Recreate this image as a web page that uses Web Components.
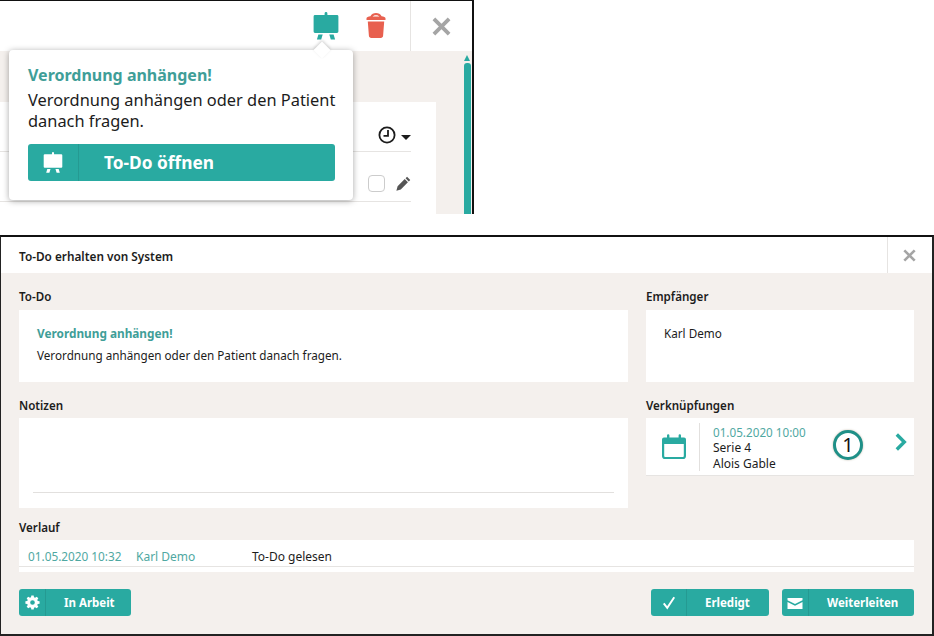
<!DOCTYPE html>
<html lang="de">
<head>
<meta charset="utf-8">
<title>To-Do</title>
<style>
  html,body{margin:0;padding:0;background:#fff;}
  body{width:934px;height:636px;overflow:hidden;font-family:"Noto Sans","Open Sans",sans-serif;color:#1c1c1c;display:flex;flex-direction:column;}
</style>
</head>
<body>

<todo-snippet>
  <todo-popover>
    <span slot="title">Verordnung anhängen!</span>
    Verordnung anhängen oder den Patient danach fragen.
    <todo-button slot="action" icon="board" divider="50" size="17.3" height="37" inset="25">To-Do öffnen</todo-button>
  </todo-popover>
</todo-snippet>

<todo-dialog heading="To-Do erhalten von System">
  <todo-section slot="main" label="To-Do" height="72" label-h="37" pad="15px 18px">
    <div style="color:#3f9e98;font-weight:700;line-height:16px;font-size:11.8px">Verordnung anhängen!</div>
    <div style="margin-top:6px;line-height:16px;font-size:11.7px">Verordnung anhängen oder den Patient danach fragen.</div>
  </todo-section>
  <todo-section slot="side" label="Empfänger" height="72" label-h="37" pad="15px 18px">
    <div style="line-height:16px;font-size:11.7px">Karl Demo</div>
  </todo-section>
  <todo-section slot="main" label="Notizen" height="90" pad="0 14px">
    <div style="height:74px;border-bottom:1px solid #e2e0de"></div>
  </todo-section>
  <todo-section slot="side" label="Verknüpfungen" height="58">
    <todo-link date="01.05.2020 10:00" series="Serie 4" patient="Alois Gable" count="1"></todo-link>
  </todo-section>
  <todo-section slot="wide" label="Verlauf" height="32" label-h="32" label-top="11">
    <todo-log-row when="01.05.2020 10:32" who="Karl Demo" what="To-Do gelesen"></todo-log-row>
  </todo-section>
  <todo-button slot="left" icon="gear" divider="26" size="11.5" height="27" width="112" inset="18">In Arbeit</todo-button>
  <todo-button slot="right" icon="check" divider="35" size="11.5" height="27" width="118" inset="18">Erledigt</todo-button>
  <todo-button slot="right" icon="mail" divider="26" size="11.5" height="27" width="132" inset="18">Weiterleiten</todo-button>
</todo-dialog>

<script>
const ICONS = {
  board: `<svg viewBox="0 0 26 28" width="100%" height="100%"><path fill="currentColor" d="M11.6 1.5a1.4 1.4 0 0 1 2.8 0V3H24a1.4 1.4 0 0 1 1.4 1.4v15.2A1.4 1.4 0 0 1 24 21H2a1.4 1.4 0 0 1-1.4-1.4V4.4A1.4 1.4 0 0 1 2 3h9.6zM5.4 22.5h4.3L8.2 27.6H3.9zM16.3 22.5h4.3l1.5 5.1h-4.3z"/></svg>`,
  trash: `<svg viewBox="0 0 20 25" width="100%" height="100%"><path fill="currentColor" d="M10 0c2.4 0 4.5 1.2 5.6 3.2 2 .3 3.9.9 3.9 2.1V7H.5V5.3c0-1.2 1.9-1.8 3.9-2.1C5.5 1.2 7.600 0 10 0zm0 2.300c-1.400 0-2.600.5-3.400 1.300 2.200-.2 4.600-.2 6.800 0-.8-.8-2-1.300-3.400-1.300zM1.800 8.500h16.400l-1.100 14.300c-.1 1.300-1.100 2.200-2.300 2.200H5.200c-1.200 0-2.200-.9-2.300-2.200z"/></svg>`,
  close: `<svg viewBox="0 0 20 20" width="100%" height="100%"><path fill="none" stroke="currentColor" stroke-width="4" d="M2 2l16 16M18 2L2 18"/></svg>`,
  clock: `<svg viewBox="0 0 18 18" width="100%" height="100%"><circle cx="9" cy="9" r="7.600" fill="none" stroke="currentColor" stroke-width="1.800"/><path fill="none" stroke="currentColor" stroke-width="1.800" d="M10 4v5.800H5.500"/></svg>`,
  pencil: `<svg viewBox="0 0 16 16" width="100%" height="100%"><path fill="currentColor" d="M11.800.8l3.400 3.400-1.600 1.600-3.400-3.400zM9.300 3.300l3.400 3.400-7.600 7.600L.4 15.600l1.300-4.700z"/></svg>`,
  gear: `<svg viewBox="-1 -1 18 18" width="100%" height="100%"><path fill="currentColor" fill-rule="evenodd" d="M6.600-.5h2.800l.4 2.200 1.300.6 1.900-1.300 2 2-1.300 1.900.6 1.300 2.200.4v2.800l-2.200.4-.6 1.300 1.300 1.900-2 2-1.900-1.300-1.300.6-.4 2.200H6.600l-.4-2.200-1.300-.6-1.900 1.300-2-2 1.300-1.900-.6-1.300-2.200-.4V6.600l2.200-.4.6-1.300L1 3l2-2 1.900 1.300 1.300-.6zM8 5.200a2.800 2.800 0 1 0 0 5.600 2.800 2.800 0 0 0 0-5.600z"/></svg>`,
  check: `<svg viewBox="0 0 16 16" width="100%" height="100%"><path fill="none" stroke="currentColor" stroke-width="2.200" d="M2 8.500l4 5L14 1.500"/></svg>`,
  mail: `<svg viewBox="0 0 16 11" width="100%" height="100%"><path fill="currentColor" d="M.5 0h15v2.300L8 6 .5 2.300zM.5 4.100L8 7.800l7.500-3.700V11H.5z"/></svg>`,
  calendar: `<svg viewBox="0 0 26 26" width="100%" height="100%"><path fill="none" stroke="currentColor" stroke-width="2.200" d="M2.100 7.500V22a2 2 0 0 0 2 2h17.800a2 2 0 0 0 2-2V7.500"/><path fill="currentColor" d="M3 3.500h3V1.500a1.200 1.200 0 0 1 2.400 0v2h9.200v-2a1.200 1.200 0 0 1 2.400 0v2h3a2 2 0 0 1 2 2V10H1V5.500a2 2 0 0 1 2-2z"/></svg>`,
  chevron: `<svg viewBox="0 0 12 18" width="100%" height="100%"><path fill="none" stroke="currentColor" stroke-width="3.400" d="M1.800 1.500l7.500 7.500-7.500 7.500"/></svg>`
};

// small helper, every element gets the same open shadow setup
class Base extends HTMLElement {
  render(css, html) {
    if (!this.shadowRoot) this.attachShadow({ mode: 'open' });
    this.shadowRoot.innerHTML = `<style>${css}</style>${html}`;
  }
}

class TodoIcon extends Base {
  connectedCallback() {
    const w = this.getAttribute('w') || 16;
    const h = this.getAttribute('h') || w;
    const color = this.getAttribute('color') || 'inherit';
    this.render(`:host{display:block;width:${w}px;height:${h}px;color:${color};flex:none}`, ICONS[this.getAttribute('name')] || '');
  }
}

class TodoButton extends Base {
  connectedCallback() {
    const div = this.getAttribute('divider');
    const size = this.getAttribute('size');
    const h = this.getAttribute('height');
    const w = this.getAttribute('width');
    const icon = this.getAttribute('icon');
    const dims = { board: [20, 21], gear: [15, 15], check: [14, 14], mail: [16, 11] }[icon];
    this.render(`
      :host{display:flex;height:${h}px;${w ? `width:${w}px;` : ''}background:#29aaa1;color:#fff;border-radius:3px;font-weight:700;font-size:${size}px;box-sizing:border-box}
      .ico{width:${div}px;flex:none;display:flex;align-items:center;justify-content:center;border-right:1px solid #259a92;box-sizing:content-box}
      .txt{flex:1;display:flex;align-items:center;padding-left:${this.getAttribute('inset')}px;white-space:nowrap}
    `, `<div class="ico"><todo-icon name="${icon}" w="${dims[0]}" h="${dims[1]}"></todo-icon></div><div class="txt"><slot></slot></div>`);
  }
}

class TodoPopover extends Base {
  connectedCallback() {
    this.render(`
      :host{display:block;position:absolute;left:9px;top:49px;width:344px;height:150px;box-sizing:border-box;padding:14px 18px 0 19px;background:#fff;border-radius:4px;box-shadow:0 1px 6px rgba(0,0,0,.35);font-size:16.4px;line-height:21px;color:#1c1c1c}
      :host::before{content:"";position:absolute;left:307px;top:-6px;width:12px;height:12px;background:#fff;transform:rotate(45deg);box-shadow:-1px -1px 3px rgba(0,0,0,.18)}
      .title{color:#3f9e98;font-weight:700;font-size:16px;line-height:22px;position:relative}
      .body{margin:3px -6px 0 0;position:relative}
      .act{margin-top:13px;position:relative}
    `, `<div class="title"><slot name="title"></slot></div><div class="body"><slot></slot></div><div class="act"><slot name="action"></slot></div>`);
  }
}

class TodoSnippet extends Base {
  connectedCallback() {
    this.render(`
      :host{display:block;position:relative;width:474px;height:214px;box-sizing:border-box;border-top:1px solid #111;border-right:2px solid #111;background:#f4f0ed;flex:none}
      .head{display:flex;height:50px;background:#fff;justify-content:flex-end}
      .tools{display:flex;align-items:flex-start;gap:27px;padding:11px 24px 0 0}
      .tools todo-icon:last-child{margin-top:1px}
      .close{width:62px;border-left:1px solid #e6e4e2;display:flex;align-items:center;justify-content:center;color:#a5a5a5;box-sizing:border-box}
      .body{display:flex;height:163px;overflow:hidden}
      .card{width:436px;margin-top:51px;background:#fff;box-sizing:border-box;font-size:0}
      .hd{height:50px;border-bottom:1px solid #e6e4e2;margin-right:25px;display:flex;justify-content:flex-end;align-items:center;gap:5px;color:#1c1c1c;box-sizing:border-box;padding-top:17px}
      .caret{width:0;height:0;border:5px solid transparent;border-top-color:#1c1c1c;border-bottom:0;margin-top:4px}
      .row{height:50px;border-bottom:1px solid #e6e4e2;margin-right:25px;display:flex;justify-content:flex-end;align-items:center;gap:11px;box-sizing:border-box;padding-top:14px}
      .cb{width:17px;height:17px;border:1px solid #ccc;border-radius:4px;box-sizing:border-box;background:#fff}
      .track{flex:none;display:flex;flex-direction:column;align-items:flex-start;margin-left:28px;padding-top:4px;width:7px}
      .arrow{width:0;height:0;border:3.500px solid transparent;border-bottom:6px solid #29aaa1;border-top:0;flex:none}
      .bar{flex:1;width:7px;margin-top:2px;background:#29aaa1;border-radius:3px 3px 0 0}
    `, `
      <div class="head">
        <div class="tools">
          <todo-icon name="board" w="26" h="28" color="#29aaa1"></todo-icon>
          <todo-icon name="trash" w="20" h="25" color="#e8604f"></todo-icon>
        </div>
        <div class="close"><todo-icon name="close" w="19" h="19"></todo-icon></div>
      </div>
      <div class="body">
        <div class="card">
          <div class="hd"><todo-icon name="clock" w="18" h="18"></todo-icon><span class="caret"></span></div>
          <div class="row"><span class="cb"></span><todo-icon name="pencil" w="15" h="15" color="#555"></todo-icon></div>
        </div>
        <div class="track"><span class="arrow"></span><span class="bar"></span></div>
      </div>
      <slot></slot>`);
  }
}

class TodoDialog extends Base {
  connectedCallback() {
    this.render(`
      :host{display:flex;flex-direction:column;position:relative;margin-top:21px;width:934px;height:401px;box-sizing:border-box;border-top:2px solid #111;border-left:1px solid #222;border-right:2px solid #222;border-bottom:2px solid #222;background:#f4f0ed;font-size:12px;flex:none}
      header{display:flex;height:36px;background:#fff;align-items:center;font-weight:600;color:#1c1c1c;flex:none;box-sizing:border-box}
      h1{flex:1;margin:0;padding:1px 0 0 18px;font:inherit;font-size:11.8px}
      .x{width:45px;height:100%;border-left:1px solid #e6e4e2;display:flex;align-items:center;justify-content:center;color:#a5a5a5;box-sizing:border-box;padding-right:2px}
      main{display:grid;grid-template-columns:609px 268px;column-gap:18px;padding:0 18px}
      .col{display:flex;flex-direction:column}
      .wide{grid-column:1 / 3}
      footer{display:flex;justify-content:space-between;padding:17px 18px 0}
      .r{display:flex;gap:13px}
    `, `
      <header><h1>${this.getAttribute('heading')}</h1><div class="x"><todo-icon name="close" w="13" h="13"></todo-icon></div></header>
      <main>
        <div class="col"><slot name="main"></slot></div>
        <div class="col"><slot name="side"></slot></div>
        <div class="wide"><slot name="wide"></slot></div>
      </main>
      <footer><slot name="left"></slot><div class="r"><slot name="right"></slot></div></footer>`);
  }
}

class TodoSection extends Base {
  connectedCallback() {
    const pad = this.getAttribute('pad') || '0';
    const lh = this.getAttribute('label-h') || 36;
    const lt = this.getAttribute('label-top') || 15;
    this.render(`
      :host{display:block}
      .lb{height:${lh}px;box-sizing:border-box;padding-top:${lt}px;line-height:17px;font-weight:600;color:#1c1c1c;font-size:11.6px}
      .box{background:#fff;height:${this.getAttribute('height')}px;box-sizing:border-box;padding:${pad}}
    `, `<div class="lb">${this.getAttribute('label')}</div><div class="box"><slot></slot></div>`);
  }
}

class TodoLink extends Base {
  connectedCallback() {
    const a = n => this.getAttribute(n);
    this.render(`
      :host{display:flex;height:58px;align-items:center;border-bottom:1px solid #e6e4e2;box-sizing:border-box;font-size:12px;line-height:16px;position:relative}
      .ic{width:54px;height:48px;flex:none;display:flex;align-items:center;justify-content:center;border-right:1px solid #e2e0de;box-sizing:border-box;color:#29aaa1;padding-left:3px}
      .tx{padding:2px 0 0 13px;flex:1}
      .d{color:#4fa8a2;font-size:11.7px}
      .n{position:absolute;left:187px;top:12px;width:30px;height:30px;border:3px solid #1f9088;border-radius:50%;box-sizing:border-box;font-size:20px;line-height:24px;text-align:center;color:#111;background:#fff;box-shadow:0 0 2px rgba(120,100,60,.5)}
      .chev{position:absolute;left:249px;top:15px;color:#29aaa1}
    `, `
      <div class="ic"><todo-icon name="calendar" w="26" h="26"></todo-icon></div>
      <div class="tx"><div class="d">${a('date')}</div><div>${a('series')}</div><div>${a('patient')}</div></div>
      <div class="n">${a('count')}</div>
      <todo-icon class="chev" name="chevron" w="12" h="18"></todo-icon>`);
  }
}

class TodoLogRow extends Base {
  connectedCallback() {
    const a = n => this.getAttribute(n);
    this.render(`
      :host{display:flex;height:27px;border-bottom:1px solid #e6e4e2;box-sizing:border-box;align-items:center;font-size:12px;padding:6px 0 0 9px;white-space:nowrap}
      .a{color:#4fa8a2;width:108px;font-size:11.8px}
      .b{color:#4fa8a2;width:116px}
    `, `<span class="a">${a('when')}</span><span class="b">${a('who')}</span><span>${a('what')}</span>`);
  }
}

customElements.define('todo-icon', TodoIcon);
customElements.define('todo-button', TodoButton);
customElements.define('todo-popover', TodoPopover);
customElements.define('todo-snippet', TodoSnippet);
customElements.define('todo-dialog', TodoDialog);
customElements.define('todo-section', TodoSection);
customElements.define('todo-link', TodoLink);
customElements.define('todo-log-row', TodoLogRow);
</script>
</body>
</html>
